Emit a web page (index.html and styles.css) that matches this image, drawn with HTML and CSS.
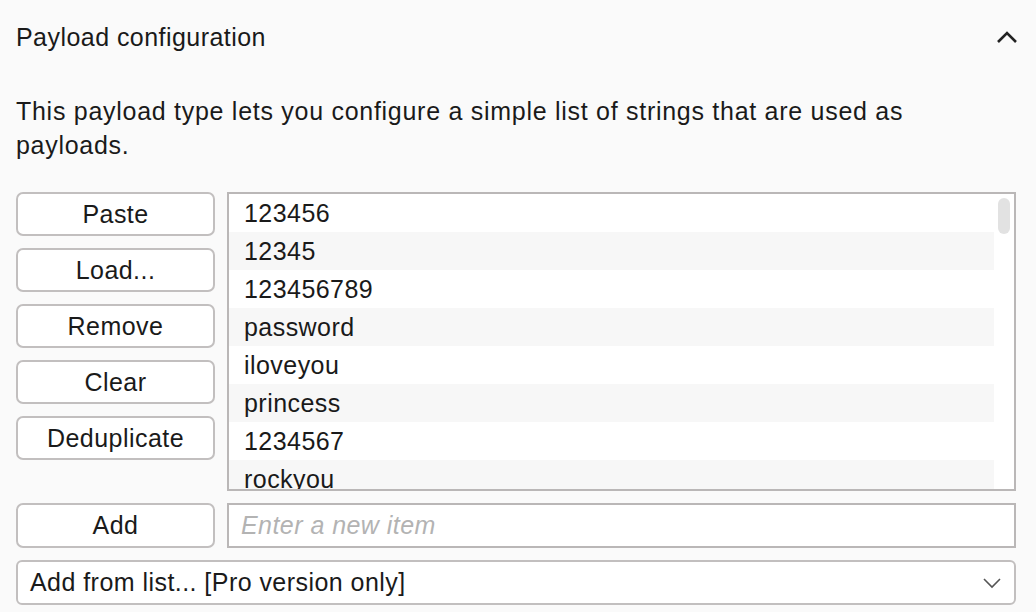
FILE: index.html
```html
<!DOCTYPE html>
<html>
<head>
<meta charset="utf-8">
<link rel="stylesheet" href="styles.css">
</head>
<body>
<div class="panel">
  <div class="header">
    <span class="title">Payload configuration</span>
    <svg class="chev-up" width="22" height="14" viewBox="0 0 22 14"><path d="M2 12 L11 3 L20 12" fill="none" stroke="#222" stroke-width="2.6"/></svg>
  </div>
  <p class="desc">This payload type lets you configure a simple list of strings that are used as payloads.</p>
  <div class="editor">
    <div class="buttons">
      <button class="btn">Paste</button>
      <button class="btn">Load...</button>
      <button class="btn">Remove</button>
      <button class="btn">Clear</button>
      <button class="btn">Deduplicate</button>
    </div>
    <div class="list">
      <div class="rows">
        <div class="row">123456</div>
        <div class="row alt">12345</div>
        <div class="row">123456789</div>
        <div class="row alt">password</div>
        <div class="row">iloveyou</div>
        <div class="row alt">princess</div>
        <div class="row">1234567</div>
        <div class="row alt">rockyou</div>
      </div>
      <div class="scroll"><div class="thumb"></div></div>
    </div>
  </div>
  <div class="add-row">
    <button class="btn">Add</button>
    <div class="input"><span class="placeholder">Enter a new item</span></div>
  </div>
  <div class="select">
    <span>Add from list... [Pro version only]</span>
    <svg width="20" height="12" viewBox="0 0 20 12"><path d="M2 2 L10 10 L18 2" fill="none" stroke="#555" stroke-width="1.6"/></svg>
  </div>
</div>
</body>
</html>
```

FILE: styles.css
```css
* { box-sizing: border-box; }
body {
  margin: 0;
  background: #fafafa;
  font-family: "Liberation Sans", Arial, sans-serif;
  font-size: 25px;
  letter-spacing: 0.45px;
  color: #1a1a1a;
}
.panel {
  padding: 0 20px 0 16px;
}
.header {
  height: 74px;
  display: flex;
  align-items: center;
  justify-content: space-between;
}
.chev-up { margin-right: -2px; }
.desc {
  margin: 20px 0 0 0;
  line-height: 34px;
  letter-spacing: 0.72px;
  max-width: 920px;
}
.editor {
  margin-top: 30px;
  display: flex;
  gap: 12px;
}
.buttons {
  display: flex;
  flex-direction: column;
  gap: 12px;
  width: 199px;
  flex: none;
}
.btn {
  width: 199px;
  height: 44px;
  background: #fff;
  border: 2px solid #c2bfbf;
  border-radius: 7px;
  font-family: inherit;
  font-size: 25px;
  letter-spacing: 0.45px;
  color: #1a1a1a;
  padding: 0;
}
.list {
  flex: 1;
  height: 299px;
  border: 2px solid #bab7b7;
  background: #fff;
  display: flex;
  overflow: hidden;
}
.rows {
  flex: 1;
}
.row {
  height: 38px;
  line-height: 38px;
  padding-left: 15px;
}
.row.alt { background: #f7f7f7; }
.scroll {
  width: 20px;
  flex: none;
  padding: 4px 4px 0 4px;
}
.thumb {
  width: 12px;
  height: 36px;
  border-radius: 6px;
  background: #e2e2e2;
}
.add-row {
  margin-top: 12px;
  display: flex;
  gap: 12px;
}
.add-row .btn { height: 45px; flex: none; }
.input {
  flex: 1;
  height: 45px;
  border: 2px solid #bab7b7;
  background: #fff;
  display: flex;
  align-items: center;
  padding-left: 12px;
}
.placeholder {
  font-style: italic;
  color: #b3b3b3;
}
.select {
  margin-top: 12px;
  height: 45px;
  border: 2px solid #c2bfbf;
  border-radius: 6px;
  background: #fff;
  display: flex;
  align-items: center;
  justify-content: space-between;
  padding: 0 12px 0 12px;
}
```
